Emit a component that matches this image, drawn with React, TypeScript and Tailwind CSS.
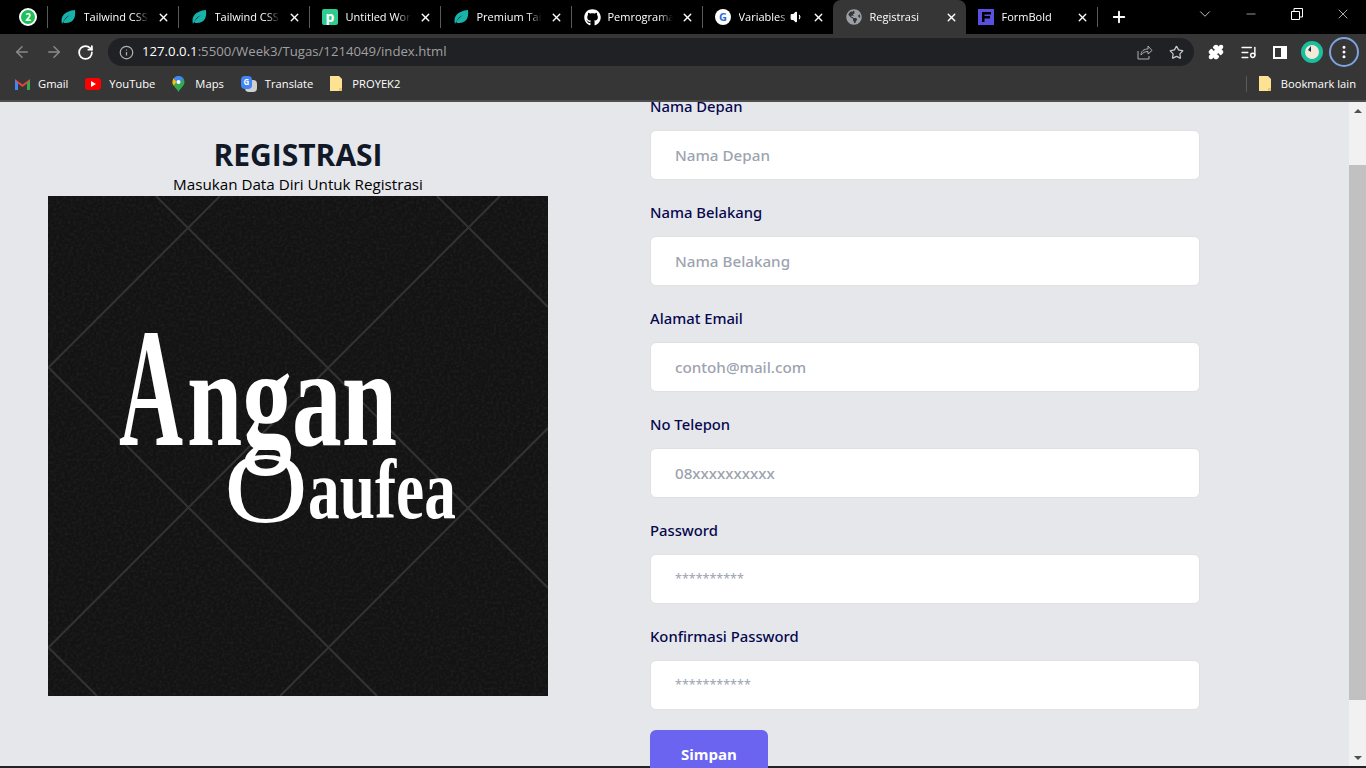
import { ReactNode } from 'react';
import { ArrowLeft, ArrowRight, RotateCw, Info, Star, X, Plus, ChevronDown, Minus, MoreVertical, Volume1, ListMusic, Puzzle } from 'lucide-react';
import { FaGithub, FaGlobeAmericas } from 'react-icons/fa';

const font = 'font-["Open_Sans","Noto_Sans",sans-serif]';

function Leaf() {
  return (
    <svg width="16" height="16" viewBox="0 0 16 16">
      <path d="M2 15C0 8 4 2 15 1c1 8-2 13-9 13-1 0-2 0-3-1C5 10 7 8 10 6 7 7 4 10 2 15Z" fill="#17b3ab" />
    </svg>
  );
}

function WhatsappBadge() {
  return (
    <div className="flex h-[18px] w-[18px] items-center justify-center rounded-full border-2 border-white bg-[#1fbf5a] text-[10px] font-bold leading-none text-white">
      2
    </div>
  );
}

function Pushbullet() {
  return (
    <div className="flex h-4 w-4 items-center justify-center rounded-[2px] bg-[#2ecc8f] text-[14px] font-bold leading-none text-white">
      p
    </div>
  );
}

function FormBoldIcon() {
  return (
    <svg width="16" height="16" viewBox="0 0 16 16">
      <rect width="16" height="16" fill="#5a50e0" />
      <path d="M4 3h9v2.500H6.500V7H12v2.500H6.500V13H4Z" fill="#000" />
    </svg>
  );
}

function Tab({ icon, title, audio, active, noSep }: { icon: ReactNode; title: string; audio?: boolean; active?: boolean; noSep?: boolean }) {
  return (
    <div
      className={`relative flex h-[34px] shrink-0 items-center pr-2 ${active ? 'w-[133px] rounded-t-lg bg-[#363636] pl-[13px]' : 'w-[131px] pl-3'} ${noSep ? '' : 'border-l border-[#4a4a4a] [border-image:linear-gradient(transparent_7px,#5a5a5a_7px,#5a5a5a_27px,transparent_27px)_1]'}`}
    >
      <div className="flex w-[23.5px] shrink-0">{icon}</div>
      <span className="min-w-0 flex-1 overflow-hidden whitespace-nowrap text-[11px] text-white [mask-image:linear-gradient(to_right,#000_78%,transparent)]">
        {title}
      </span>
      {audio && <Volume1 size={14} fill="#fff" className="shrink-0 text-white" />}
      <X size={13} strokeWidth={2.5} className="ml-2 shrink-0 text-white" />
    </div>
  );
}

function Bookmark({ icon, label, gap }: { icon: ReactNode; label: string; gap: string }) {
  return (
    <div className={`flex items-center ${gap}`}>
      {icon}
      <span className="text-[11.2px] text-white">{label}</span>
    </div>
  );
}

function Folder() {
  return (
    <svg width="12" height="15" viewBox="0 0 12 15">
      <path d="M0 0h9l3 3v12H0Z" fill="#fde293" />
      <path d="M9 12h3v3H9Z" fill="#e8c968" />
    </svg>
  );
}

function Field({ label, placeholder, star }: { label: string; placeholder: string; star?: boolean }) {
  return (
    <div className="mb-5">
      <label className='mb-3 block h-6 font-["Noto_Sans",sans-serif] text-[14.8px] font-medium leading-6 text-[#07074d]'>{label}</label>
      <div className={`flex h-[50px] items-center rounded-md border border-[#e0e0e0] bg-white px-6 font-["Noto_Sans",sans-serif] text-[#9ca3af] ${star ? 'text-[12.5px]' : 'text-[15.2px] font-medium'}`}>
        {placeholder}
      </div>
    </div>
  );
}

function Logo() {
  const lines = [
    [108, 0, 500, 392],
    [0, 171, 329, 500],
    [389, 0, 500, 111],
    [0, 451, 49, 500],
    [172, 0, 0, 172],
    [452, 0, 0, 452],
    [500, 232, 232, 500],
  ];
  return (
    <svg width="500" height="500" viewBox="0 0 500 500" className="block bg-[#131313]">
      <filter id="grain">
        <feTurbulence type="fractalNoise" baseFrequency="0.35" numOctaves="2" />
        <feColorMatrix values="0 0 0 0 1  0 0 0 0 1  0 0 0 0 1  0.1 0 0 0 -0.04" />
      </filter>
      <rect width="500" height="500" filter="url(#grain)" />
      {lines.map((l, i) => (
        <line key={i} x1={l[0]} y1={l[1]} x2={l[2]} y2={l[3]} stroke="#333333" strokeWidth="2" />
      ))}
      <text x="71" y="249" fill="#fff" fontFamily="Liberation Serif" fontWeight="bold" fontSize="170" textLength="64" lengthAdjust="spacingAndGlyphs">A</text>
      <text x="139" y="249" fill="#fff" fontFamily="Liberation Serif" fontWeight="bold" fontSize="140" textLength="210" lengthAdjust="spacingAndGlyphs">ngan</text>
      <text x="176" y="327" fill="#fff" fontFamily="Liberation Serif" fontSize="102" textLength="84" lengthAdjust="spacingAndGlyphs">O</text>
      <text x="260" y="322" fill="#fff" fontFamily="Liberation Serif" fontWeight="bold" fontSize="84" textLength="148" lengthAdjust="spacingAndGlyphs">aufea</text>
    </svg>
  );
}

export default function App() {
  return (
    <div className={`flex h-[768px] w-[1366px] flex-col overflow-hidden bg-[#e5e7eb] ${font}`}>
      {/* tab strip */}
      <div className="flex h-[34px] shrink-0 items-center bg-black">
        <div className="flex w-[47px] shrink-0 justify-center pl-[9px]">
          <WhatsappBadge />
        </div>
        <Tab icon={<Leaf />} title="Tailwind CSS" />
        <Tab icon={<Leaf />} title="Tailwind CSS" />
        <Tab icon={<Pushbullet />} title="Untitled Wor" />
        <Tab icon={<Leaf />} title="Premium Tail" />
        <Tab icon={<FaGithub size={17} className="text-white" />} title="Pemrograma" />
        <Tab icon={<div className="flex h-4 w-4 items-center justify-center rounded-full bg-white text-[11px] font-bold text-[#2a6ad9]">G</div>} title="Variables" audio />
        <Tab icon={<FaGlobeAmericas size={16} className="text-[#9aa0a6]" />} title="Registrasi" active noSep />
        <Tab icon={<FormBoldIcon />} title="FormBold" noSep />
        <div className="flex h-5 items-center border-l border-[#5a5a5a] pl-3">
          <Plus size={18} strokeWidth={2.5} className="text-white" />
        </div>
        <div className="ml-auto flex items-center pb-[6px] text-white">
          <ChevronDown size={18} strokeWidth={1} className="mr-[30px]" />
          <Minus size={14} strokeWidth={1} className="mr-[33px]" />
          <svg width="12" height="12" viewBox="0 0 12 12" fill="none" stroke="#fff" className="mr-[32px]">
            <path d="M.5 3.500h8v8h-8ZM3 3.500V.5h8.500V9H8.500" />
          </svg>
          <X size={16} strokeWidth={1} className="mr-[15px]" />
        </div>
      </div>

      {/* toolbar */}
      <div className="flex h-[36px] shrink-0 items-center bg-[#363636]">
        <div className="flex w-[108px] items-center gap-[14px] pl-[13px]">
          <ArrowLeft size={18} className="text-[#8a8a8a]" />
          <ArrowRight size={18} className="text-[#8a8a8a]" />
          <RotateCw size={17} strokeWidth={2.5} className="text-white" />
        </div>
        <div className="flex h-7 w-[1086px] items-center rounded-full bg-[#202124] pl-[11px] pr-[10px] text-[13.2px]">
          <Info size={15} className="text-[#b0b0b0]" />
          <span className="ml-[8px] text-white">127.0.0.1</span>
          <span className="text-[#a0a0a0]">:5500/Week3/Tugas/1214049/index.html</span>
          <svg width="16" height="16" viewBox="0 0 16 16" fill="none" stroke="#b0b0b0" className="ml-auto">
            <path d="M1 7v8h11v-3M4 11c0-4 3-6 7-6V2l4 4.500L11 10V7.500C8 7.500 6 8.500 4 11Z" />
          </svg>
          <Star size={15} className="ml-[16px] text-[#c8c8c8]" />
        </div>
        <div className="flex flex-1 items-center pl-[14px] text-white">
          <Puzzle size={16} fill="#fff" />
          <ListMusic size={17} className="ml-[16px]" />
          <svg width="14" height="13" viewBox="0 0 14 13" className="ml-[16px]">
            <path d="M0 0h14v13H0Z" fill="#fff" />
            <path d="M2 2h6v9H2Z" fill="#363636" />
          </svg>
          <div className="ml-[14px] flex h-[22px] w-[22px] items-center justify-center rounded-full bg-[#1bbf9c]">
            <svg width="14" height="14" viewBox="0 0 14 14">
              <circle cx="7" cy="7" r="7" fill="#f4e8d8" />
              <path d="M6 1v6L3 5Z" fill="#12323a" />
            </svg>
          </div>
          <div className="ml-[6px] flex h-[30px] w-[30px] items-center justify-center rounded-full border-2 border-[#7da4e0]">
            <MoreVertical size={16} strokeWidth={2.5} />
          </div>
        </div>
      </div>

      {/* bookmarks */}
      <div className="flex h-[32px] shrink-0 items-center justify-between border-b-2 border-[#4d4d4d] bg-[#363636] pb-[2px] pl-[15px] pr-[10px]">
        <div className="flex items-center gap-[17px]">
          <Bookmark
            gap="gap-2"
            icon={
              <svg width="15" height="12" viewBox="0 0 15 12">
                <path d="M0 12V1l7.500 5.500L15 1v11h-3V5.500L7.500 9 3 5.500V12Z" fill="#ea4335" />
                <path d="M0 12V2l3 3v7Z" fill="#4285f4" />
                <path d="M12 12V5l3-3v10Z" fill="#34a853" />
              </svg>
            }
            label="Gmail"
          />
          <Bookmark
            gap="gap-2"
            icon={
              <svg width="16" height="12" viewBox="0 0 16 12">
                <rect width="16" height="12" rx="3" fill="#f00" />
                <path d="M6 3l5 3-5 3Z" fill="#fff" />
              </svg>
            }
            label="YouTube"
          />
          <Bookmark
            gap="gap-[10px]"
            icon={
              <svg width="13" height="16" viewBox="0 0 12 16">
                <path d="M6 0a6 6 0 0 1 6 6c0 4-4 6-6 10C4 12 0 10 0 6a6 6 0 0 1 6-6Z" fill="#34a853" />
                <path d="M6 0a6 6 0 0 1 5 2.500L8 6H4L1 2.500A6 6 0 0 1 6 0Z" fill="#4285f4" />
                <path d="M1 2.500 4 6 1 9.500C0 8 0 7 0 6c0-1 .3-2.500 1-3.500Z" fill="#fbbc04" />
                <circle cx="6" cy="6" r="2" fill="#fff" />
              </svg>
            }
            label="Maps"
          />
          <Bookmark
            gap="gap-2"
            icon={
              <div className="relative h-4 w-4">
                <div className="absolute right-0 bottom-0 h-3 w-3 rounded-sm bg-[#d0d0d0]" />
                <div className="absolute top-0 left-0 flex h-[13px] w-[11px] items-center justify-center rounded-sm bg-[#4285f4] text-[8px] font-bold text-white">G</div>
              </div>
            }
            label="Translate"
          />
          <Bookmark gap="gap-[10px]" icon={<Folder />} label="PROYEK2" />
        </div>
        <div className="flex items-center border-l border-[#5a5a5a] pl-3">
          <Bookmark gap="gap-[10px]" icon={<Folder />} label="Bookmark lain" />
        </div>
      </div>

      {/* page */}
      <div className="flex min-h-0 flex-1 border-b-2 border-[#222]">
        <div className="flex min-w-0 flex-1">
          <div className="flex w-[650px] shrink-0 flex-col pl-[48px] pt-[33px]">
            <div className="w-[500px] pb-[2px] text-center text-[#111827]">
              <h1 className="text-[30px] font-bold leading-[40px]">REGISTRASI</h1>
              <p className="text-[15.2px] leading-[19px] text-black">Masukan Data Diri Untuk Registrasi</p>
            </div>
            <Logo />
          </div>
          <div className="mt-[-8px] w-[550px] shrink-0">
            <Field label="Nama Depan" placeholder="Nama Depan" />
            <Field label="Nama Belakang" placeholder="Nama Belakang" />
            <Field label="Alamat Email" placeholder="contoh@mail.com" />
            <Field label="No Telepon" placeholder="08xxxxxxxxxx" />
            <Field label="Password" placeholder="**********" star />
            <Field label="Konfirmasi Password" placeholder="***********" star />
            <button className="h-[50px] w-[118px] rounded-md bg-[#6a64f1] pb-[2px] text-[15px] font-bold text-white">Simpan</button>
          </div>
        </div>
        {/* scrollbar */}
        <div className="flex w-[17px] shrink-0 flex-col bg-[#f1f1f1]">
          <div className="flex h-[17px] items-center justify-center">
            <div className="h-0 w-0 border-x-4 border-b-4 border-x-transparent border-b-[#505050]" />
          </div>
          <div className="mt-[46px] h-[535px] bg-[#c1c1c1]" />
          <div className="mt-auto flex h-[17px] items-center justify-center">
            <div className="h-0 w-0 border-x-4 border-t-4 border-x-transparent border-t-[#505050]" />
          </div>
        </div>
      </div>
    </div>
  );
}
